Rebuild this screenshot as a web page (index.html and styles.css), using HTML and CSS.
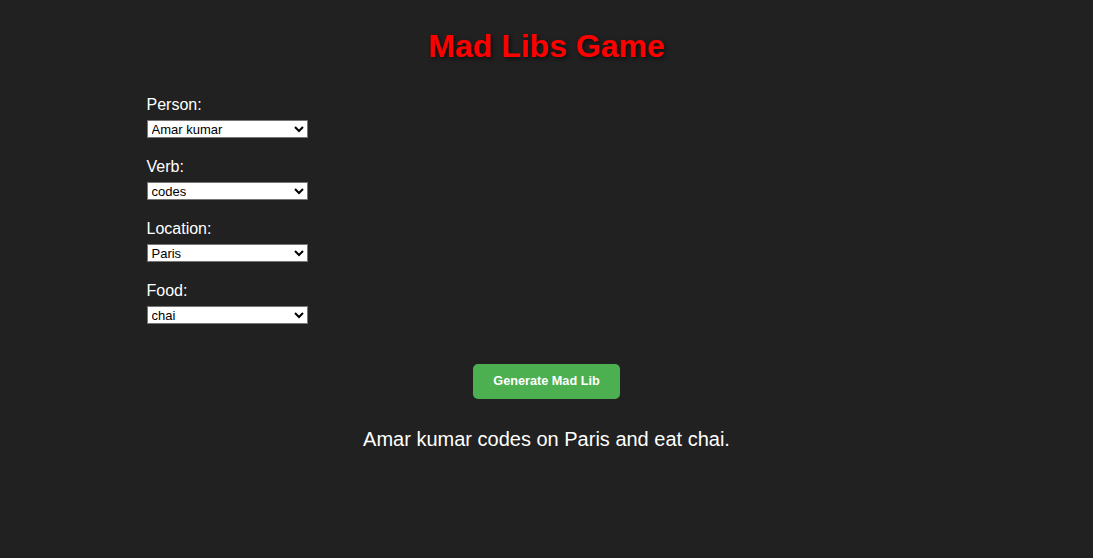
FILE: index.html
```html
<!DOCTYPE html>
<html lang="en">
<head>
<meta charset="utf-8">
<title>Mad Libs Game</title>
<link rel="stylesheet" href="styles.css">
</head>
<body>
<div class="container">
  <h1 class="title">Mad Libs Game</h1>
  <form class="form">
    <div class="field">
      <label class="label" for="person">Person:</label>
      <select class="select" id="person">
        <option>Amar kumar</option>
        <option>Rahul</option>
      </select>
    </div>
    <div class="field">
      <label class="label" for="verb">Verb:</label>
      <select class="select" id="verb">
        <option>codes</option>
        <option>dances</option>
      </select>
    </div>
    <div class="field">
      <label class="label" for="location">Location:</label>
      <select class="select" id="location">
        <option>Paris</option>
        <option>London</option>
      </select>
    </div>
    <div class="field">
      <label class="label" for="food">Food:</label>
      <select class="select" id="food">
        <option>chai</option>
        <option>pizza</option>
      </select>
    </div>
  </form>
  <div class="actions">
    <button class="button" type="button">Generate Mad Lib</button>
  </div>
  <p class="result">Amar kumar codes on Paris and eat chai.</p>
</div>
</body>
</html>
```

FILE: styles.css
```css
html, body {
  background: #212121;
}
body {
  margin: 8px;
  font-family: "Liberation Sans", Arial, sans-serif;
  color: #ffffff;
}
.container {
  width: 800px;
  margin: 0 auto;
}
.title {
  margin: 20px 0 0;
  text-align: center;
  font-size: 32px;
  font-weight: bold;
  color: #ff0000;
  text-shadow: 2px 2px 4px rgba(0, 0, 0, 0.6);
  line-height: 37px;
}
.form {
  margin-top: 31px;
  display: flex;
  flex-direction: column;
}
.field {
  display: flex;
  flex-direction: column;
  align-items: flex-start;
  margin-bottom: 20px;
}
.label {
  font-size: 16px;
  line-height: 18px;
  margin-bottom: 6px;
}
.select {
  width: 161px;
  height: 18px;
  box-sizing: border-box;
  font-family: "Liberation Sans", Arial, sans-serif;
  font-size: 13px;
  background: #ffffff;
  color: #000000;
  border: 1px solid #767676;
  border-radius: 0;
  padding: 0;
}
.actions {
  display: flex;
  justify-content: center;
  margin-top: 20px;
}
.button {
  background: #4caf50;
  color: #ffffff;
  border: none;
  border-radius: 5px;
  padding: 10px 20px;
  font-family: "Liberation Sans", Arial, sans-serif;
  font-size: 12.7px;
  font-weight: bold;
  line-height: 15px;
  cursor: pointer;
}
.result {
  margin: 29px 0 0;
  text-align: center;
  font-size: 20px;
  line-height: 23px;
}
```
